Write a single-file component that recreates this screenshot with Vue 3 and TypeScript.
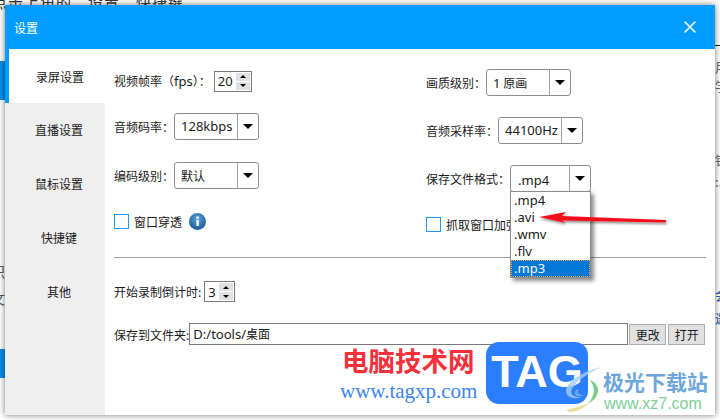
<script setup lang="ts">
const tabs = ['录屏设置', '直播设置', '鼠标设置', '快捷键', '其他']
const formats = ['.mp4', '.avi', '.wmv', '.flv', '.mp3']
</script>

<template>
  <div class="page">
    <div class="backdrop">
      <div class="bg-top">点击上角的“设置”快捷键</div>
      <div class="bg-blue one"></div>
      <div class="bg-blue two"></div>
      <div class="bg-left a">识</div>
      <div class="bg-left b">文</div>
      <div class="bg-rule"></div>
      <div class="bg-right r1">用</div>
      <div class="bg-right r2">学</div>
      <div class="bg-right r3">销</div>
      <div class="bg-right r4">:.</div>
      <div class="bg-right link l1">会</div>
      <div class="bg-right link l2">邀</div>
    </div>

    <div class="dialog">
      <header class="title-bar">
        <span>设置</span>
        <svg class="close" width="12" height="12" viewBox="0 0 12 12">
          <path d="M1 1 L11 11 M11 1 L1 11" stroke="#fff" stroke-width="1.6" stroke-linecap="round" />
        </svg>
      </header>
      <div class="content">
        <nav class="side">
          <div v-for="(tab, i) in tabs" :key="tab" class="tab" :class="{ active: i === 0 }">{{ tab }}</div>
        </nav>
        <main class="main">
          <div class="form">
            <div class="col left">
              <div class="row">
                <span>视频帧率（<span class="lat">fps</span>）：</span>
                <div class="spin">
                  <span class="lat">20</span>
                  <div class="spin-btns">
                    <i class="up"></i>
                    <i class="down"></i>
                  </div>
                </div>
              </div>
              <div class="row">
                <span>音频码率：</span>
                <div class="select"><span class="val lat">128kbps</span><span class="caret"><i></i></span></div>
              </div>
              <div class="row">
                <span>编码级别：</span>
                <div class="select"><span class="val">默认</span><span class="caret"><i></i></span></div>
              </div>
              <div class="row">
                <span class="check"></span>
                <span>窗口穿透</span>
                <svg class="info" width="17" height="17" viewBox="0 0 17 17">
                  <defs>
                    <radialGradient id="infoFill" cx="50%" cy="35%" r="70%">
                      <stop offset="0%" stop-color="#5aa6dc" />
                      <stop offset="100%" stop-color="#14528c" />
                    </radialGradient>
                  </defs>
                  <circle cx="8.5" cy="8.5" r="8.5" fill="url(#infoFill)" />
                  <rect x="7.4" y="3.5" width="2.4" height="2.2" fill="#fff" />
                  <rect x="7.4" y="7" width="2.4" height="6" fill="#fff" />
                </svg>
              </div>
            </div>
            <div class="col right">
              <div class="row">
                <span>画质级别：</span>
                <div class="select"><span class="val"><span class="lat">1</span> 原画</span><span class="caret"><i></i></span></div>
              </div>
              <div class="row">
                <span>音频采样率：</span>
                <div class="select"><span class="val lat">44100Hz</span><span class="caret"><i></i></span></div>
              </div>
              <div class="row">
                <span>保存文件格式：</span>
                <div class="select format">
                  <span class="val lat">.mp4</span><span class="caret"><i></i></span>
                  <ul class="options">
                    <li v-for="f in formats" :key="f" :class="{ current: f === '.mp3' }">{{ f }}</li>
                  </ul>
                </div>
              </div>
              <div class="row">
                <span class="check"></span>
                <span>抓取窗口加强</span>
              </div>
            </div>
          </div>
          <div class="divider"></div>
          <div class="lower">
            <div class="row">
              <span>开始录制倒计时:</span>
              <div class="spin small">
                <span class="lat">3</span>
                <div class="spin-btns">
                  <i class="up"></i>
                  <i class="down"></i>
                </div>
              </div>
            </div>
            <div class="row">
              <span>保存到文件夹:</span>
              <div class="path"><span class="lat">D:/tools/</span>桌面</div>
              <button class="btn first">更改</button>
              <button class="btn">打开</button>
            </div>
          </div>
        </main>
      </div>
    </div>

    <svg class="arrow" width="140" height="24" viewBox="0 0 140 24">
      <defs>
        <filter id="arrowShadow" x="-10%" y="-50%" width="120%" height="220%">
          <feDropShadow dx="1" dy="2" stdDeviation="1.2" flood-color="#000" flood-opacity="0.4" />
        </filter>
      </defs>
      <path d="M2 8 L29 3 L25 7 L129 11 L129 13.5 L25 11.5 L29 14 Z" fill="#f5101c" filter="url(#arrowShadow)" />
    </svg>

    <div class="mark-red">电脑技术网</div>
    <div class="mark-url">www.tagxp.com</div>
    <div class="tag">TAG</div>
    <svg class="swirl" width="50" height="48" viewBox="0 0 50 48">
      <path d="M40 1 C22 5 6 14 4 24 C3 31 12 34 20 31 C12 32 7 28 10 23 C14 15 26 7 40 1 Z" fill="#a8cdec" opacity="0.8" />
      <path d="M14 24 C10 29 16 32 22 29 C17 29 14 27 17 23 Z" fill="#8fb7dc" opacity="0.7" />
      <path d="M28 14 C38 18 40 30 26 38 C34 28 33 21 28 14 Z" fill="#76cb86" />
      <path d="M4 44 C12 42 20 40 27 37 C22 42 14 46 8 46 Z" fill="#e5df9a" />
    </svg>
    <div class="mark-site">极光下载站</div>
    <div class="mark-xz">www.xz7.com</div>
  </div>
</template>

<style scoped>
.page {
  position: relative;
  width: 720px;
  height: 420px;
  overflow: hidden;
  background: #fff;
  color: #1a1a1a;
  font-family: "Noto Sans CJK SC", "Noto Sans", sans-serif;
  font-size: 12px;
}

.lat {
  font-family: "Noto Sans", "Noto Sans CJK SC", sans-serif;
  font-size: 13px;
}

.backdrop div {
  position: absolute;
}

.bg-top {
  left: -8px;
  top: -8px;
  font-size: 15px;
  line-height: 20px;
  color: #333;
  letter-spacing: 1px;
}

.bg-blue {
  left: 0;
  width: 5px;
  background: #0a8fe8;
}

.bg-blue.one {
  top: 61px;
  height: 39px;
}

.bg-blue.two {
  top: 349px;
  height: 29px;
}

.bg-left {
  left: -9px;
  font-size: 14px;
  color: #555;
}

.bg-left.a {
  top: 261px;
}

.bg-left.b {
  top: 288px;
}

.bg-rule {
  right: 0;
  top: 45px;
  width: 5px;
  height: 1px;
  background: #222;
}

.bg-right {
  left: 715px;
  font-size: 13px;
  color: #666;
}

.bg-right.r1 { top: 57px; }
.bg-right.r2 { top: 76px; }
.bg-right.r3 { top: 150px; }
.bg-right.r4 { top: 172px; }
.bg-right.link { color: #2a5fb0; }
.bg-right.l1 { top: 285px; }
.bg-right.l2 { top: 308px; }

.dialog {
  position: absolute;
  left: 5px;
  top: 5px;
  width: 710px;
  height: 410px;
  display: flex;
  flex-direction: column;
  background: #fff;
  box-shadow: 0 0 6px rgba(0, 0, 0, 0.55);
}

.title-bar {
  flex: none;
  height: 44px;
  display: flex;
  align-items: center;
  justify-content: space-between;
  padding: 0 19px 0 9px;
  background: #009cff;
  color: #fff;
}

.content {
  flex: 1;
  display: flex;
}

.side {
  flex: none;
  width: 100px;
  background: #efefef;
}

.tab {
  height: 54px;
  display: flex;
  align-items: center;
  justify-content: center;
  padding-left: 8px;
  padding-bottom: 1px;
  box-sizing: border-box;
}

.tab.active {
  background: #fff;
  border-left: 4px solid #009cff;
  padding-left: 6px;
  padding-bottom: 0;
}

.main {
  flex: 1;
  min-width: 0;
  padding: 11px 9px 0;
}

.form {
  display: flex;
  height: 197px;
}

.col {
  display: grid;
}

.col.left {
  flex: none;
  width: 312px;
  grid-template-rows: 42px 49px 49px 42px;
}

.col.right {
  flex: 1;
  grid-template-rows: 45px 51px 45px 47px;
}

.row {
  display: flex;
  align-items: center;
  white-space: nowrap;
}

.row > span {
  flex: none;
}

.select {
  position: relative;
  flex: none;
  width: 85px;
  height: 27px;
  box-sizing: border-box;
  display: flex;
  border: 1px solid #8c8c8c;
  border-radius: 3px;
  background: #fff;
}

.select .val {
  flex: 1;
  padding-left: 6px;
  line-height: 25px;
}

.caret {
  flex: none;
  width: 20px;
  display: flex;
  align-items: center;
  justify-content: center;
  border-left: 1px solid #a0a0a0;
}

.caret i {
  width: 0;
  height: 0;
  border-left: 5px solid transparent;
  border-right: 5px solid transparent;
  border-top: 5px solid #000;
}

.select.format {
  width: 81px;
}

.select.format .val {
  line-height: 29px;
  padding-left: 7px;
}

.options {
  position: absolute;
  left: -1px;
  top: 25px;
  width: 81px;
  box-sizing: border-box;
  margin: 0;
  padding: 0;
  list-style: none;
  background: #fff;
  border: 1px solid #8c8c8c;
  box-shadow: 3px 3px 4px rgba(0, 0, 0, 0.45);
}

.options li {
  height: 17px;
  box-sizing: border-box;
  padding-left: 3px;
  line-height: 17px;
  font-family: "Noto Sans", sans-serif;
  font-size: 13px;
}

.options li.current {
  background: #0078d7;
  color: #fff;
  outline: 1px dotted #f0a040;
  outline-offset: -1px;
}

.spin {
  flex: none;
  width: 38px;
  height: 21px;
  margin-left: 3px;
  box-sizing: border-box;
  display: flex;
  align-items: center;
  justify-content: space-between;
  padding: 0 1px 0 3px;
  border: 1px solid #7a7a7a;
}

.spin.small {
  width: 31px;
}

.spin-btns {
  width: 14px;
  height: 17px;
  display: flex;
  flex-direction: column;
  gap: 1px;
}

.spin-btns i {
  flex: 1;
  display: flex;
  align-items: center;
  justify-content: center;
  background: #e1e1e1;
}

.spin-btns i::after {
  content: "";
  width: 0;
  height: 0;
  border-left: 3px solid transparent;
  border-right: 3px solid transparent;
}

.spin-btns .up::after {
  border-bottom: 3px solid #000;
}

.spin-btns .down::after {
  border-top: 3px solid #000;
}

.check {
  width: 15px;
  height: 15px;
  box-sizing: border-box;
  border: 1px solid #1e9bf0;
  margin-right: 5px;
}

.info {
  margin-left: 7px;
}

.divider {
  height: 1px;
  background: #a0a0a0;
}

.lower {
  display: flex;
  flex-direction: column;
  gap: 21px;
  padding-top: 23px;
}

.path {
  flex: none;
  width: 439px;
  height: 22px;
  box-sizing: border-box;
  padding-left: 3px;
  line-height: 20px;
  border: 1px solid #7a7a7a;
}

.btn {
  flex: none;
  width: 37px;
  height: 21px;
  padding: 0;
  border: 1px solid #adadad;
  background: #e1e1e1;
  color: #1a1a1a;
  font: inherit;
}

.btn.first {
  margin-left: 1px;
  margin-right: 2px;
}

.arrow {
  position: absolute;
  left: 537px;
  top: 209px;
}

.mark-red,
.mark-url,
.tag,
.swirl,
.mark-site,
.mark-xz {
  position: absolute;
  white-space: nowrap;
}

.mark-red {
  left: 342px;
  top: 345px;
  font-size: 26.5px;
  line-height: 30px;
  font-weight: 700;
  color: #f4303a;
}

.mark-url {
  left: 340px;
  top: 378px;
  font-family: "Liberation Serif", serif;
  font-size: 21px;
  line-height: 26px;
  color: #3d85f0;
}

.tag {
  left: 486px;
  top: 342px;
  width: 102px;
  height: 62px;
  border-radius: 13px;
  background: #2b7fff;
  color: #fff;
  font-family: "Liberation Sans", sans-serif;
  font-weight: 700;
  font-size: 45px;
  line-height: 60px;
  text-align: center;
}

.swirl {
  left: 562px;
  top: 366px;
}

.mark-site {
  left: 603px;
  top: 367px;
  font-size: 21px;
  line-height: 28px;
  font-weight: 700;
  color: #6ea6dc;
}

.mark-xz {
  left: 604px;
  top: 394px;
  font-family: "Liberation Sans", sans-serif;
  font-size: 16px;
  line-height: 20px;
  color: #7dce9a;
}
</style>
